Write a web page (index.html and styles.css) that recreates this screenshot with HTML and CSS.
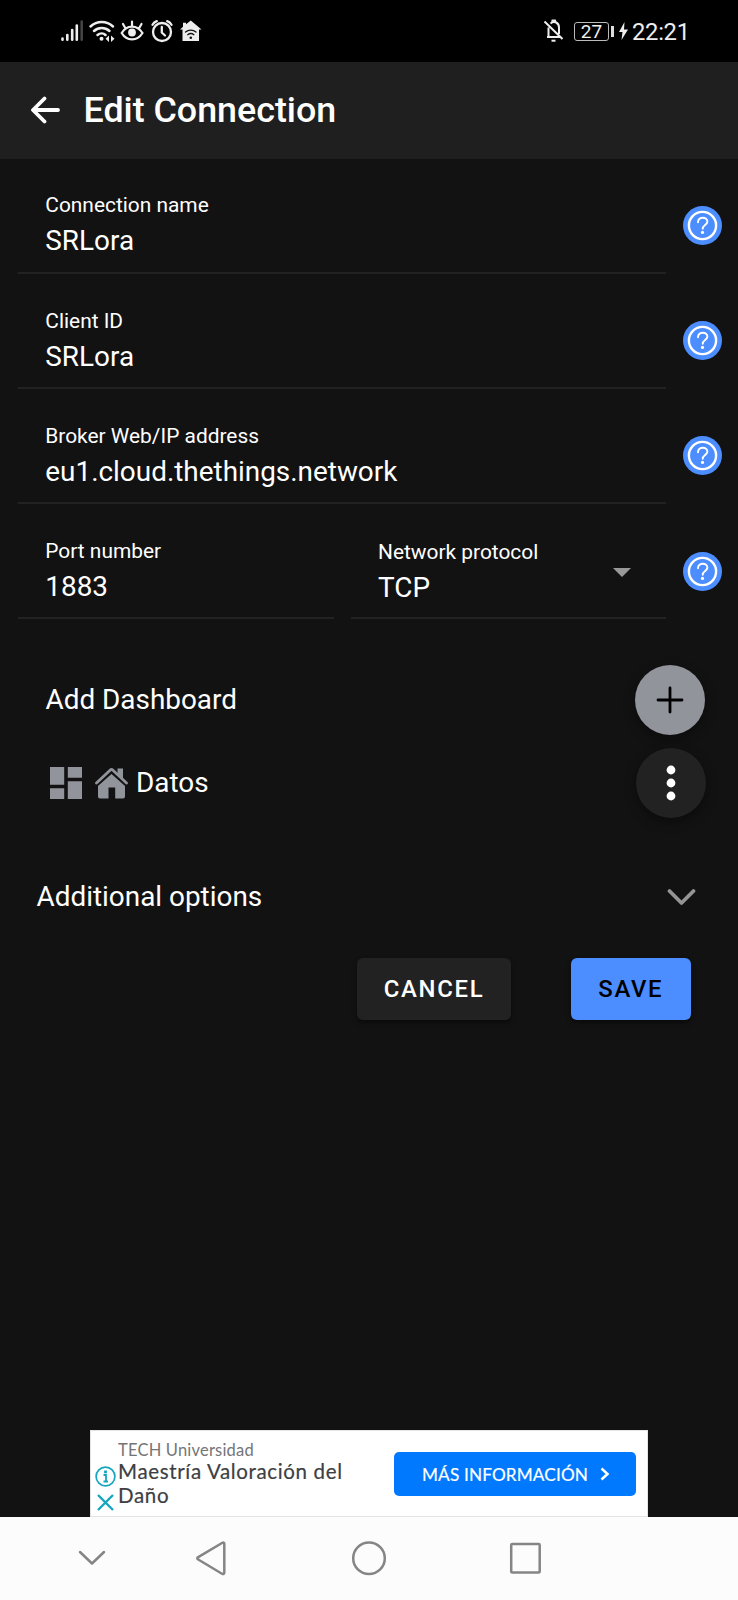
FILE: index.html
```html
<!DOCTYPE html>
<html lang="en">
<head>
<meta charset="utf-8">
<title>Edit Connection</title>
<link rel="stylesheet" href="styles.css">
</head>
<body>
<svg class="defs" width="0" height="0">
  <symbol id="help" viewBox="0 0 39 39">
    <circle cx="19.5" cy="19.5" r="19.5" fill="#4c8dff"/>
    <circle cx="19.5" cy="19.5" r="13.6" fill="none" stroke="#fff" stroke-width="2.4"/>
    <path d="M15 16.200c0-6.200 9.700-5.600 9.400-.6-.2 3.300-4.700 3.600-4.700 7.200" fill="none" stroke="#fff" stroke-width="1.900" stroke-linecap="round"/>
    <circle cx="19.500" cy="26.400" r="1.600" fill="#fff"/>
  </symbol>
</svg>
<div class="screen">
  <div class="status">
    <svg class="status-left" viewBox="60 16 144 30" width="144" height="30" fill="none" stroke="#eee" stroke-linecap="round">
      <g stroke-width="2.600"><path d="M62.500 38.500v1.200M67.300 35v4.700M72.200 30v9.700M76.800 25.500v14.200"/><path d="M81.700 21.500v18.200" stroke="#444"/></g>
      <g stroke-width="2.500"><path d="M90.500 26.500c6.500-6 16-6 22.500 0M94 31c4.500-4 11-4 15.500 0M97.500 35c2.500-2 6-2 8 0"/></g>
      <circle cx="101.500" cy="38.800" r="2" fill="#eee" stroke="none"/>
      <path d="M109 35.500v6.500l-3.500-3.200zM111 35.500v6.500l3.500-3.200z" fill="#eee" stroke="none"/>
      <g stroke-width="2.200"><path d="M121.700 33c5-8.500 15.500-8.500 20.800 0c-5.300 8.500-15.800 8.500-20.800 0zM132 21.500v4M123 24l2 3.500M141.500 24l-2 3.500"/></g>
      <circle cx="132" cy="32.500" r="3.900" fill="#eee" stroke="none"/>
      <g stroke-width="2.300"><circle cx="162" cy="32" r="9"/><path d="M161.800 27v5.500l3.200 3M152.500 24.800c1-1.800 2.500-3 4.300-3.600M171.500 24.800c-1-1.800-2.500-3-4.300-3.600"/></g>
      <path d="M180 29.500l3-2.800v-4h3v1.500l4.800-3.700 10.700 9h-2.500v11.500h-16.500v-11.500z" fill="#eee" stroke="none"/>
      <path d="M185.500 32c3-2.500 7.500-2.500 10.500 0M187.700 34.700c2-1.500 4.300-1.500 6.200 0" stroke="#111" stroke-width="1.300"/>
      <circle cx="190.800" cy="37.800" r="1.300" fill="#111" stroke="none"/>
    </svg>
    <div class="status-right">
      <svg viewBox="543 18 22 26" width="22" height="26" fill="none" stroke="#eee" stroke-width="2">
        <path d="M544.500 21.500l18 17.500M547 37h13M548.500 37v-9.500M550.500 23.500c4-3.500 8.500-.5 8.500 4v6.500M552 22l.5-1.500h2.500l.5 1.500"/><path d="M551.500 40.700h4"/>
      </svg>
      <span class="battery">27</span><span class="battery-tip"></span>
      <svg class="bolt" viewBox="0 0 9 18" width="9" height="18"><path d="M5.500 0L0 10h3.500L2.500 18 9 7.500H5z" fill="#eee"/></svg>
      <span class="clock">22:21</span>
    </div>
  </div>
  <header class="header">
    <svg viewBox="0 0 30 28" width="30" height="28" fill="none" stroke="#fff" stroke-width="3.800" stroke-linecap="round" stroke-linejoin="round"><path d="M14.500 2.500L3 14l11.500 11.500M3.500 14h24.500"/></svg>
    <h1 class="title">Edit Connection</h1>
  </header>
  <main class="form">
    <div class="row">
      <div class="field"><span class="label">Connection name</span><span class="value">SRLora</span></div>
      <svg class="help" width="39" height="39"><use href="#help"/></svg>
    </div>
    <div class="row">
      <div class="field"><span class="label">Client ID</span><span class="value">SRLora</span></div>
      <svg class="help" width="39" height="39"><use href="#help"/></svg>
    </div>
    <div class="row">
      <div class="field"><span class="label">Broker Web/IP address</span><span class="value">eu1.cloud.thethings.network</span></div>
      <svg class="help" width="39" height="39"><use href="#help"/></svg>
    </div>
    <div class="row split">
      <div class="field"><span class="label">Port number</span><span class="value">1883</span></div>
      <div class="field select">
        <div class="select-text"><span class="label">Network protocol</span><span class="value">TCP</span></div>
        <svg class="caret" width="18" height="9" viewBox="0 0 18 9"><path d="M0 0h18L9 9z" fill="#999"/></svg>
      </div>
      <svg class="help" width="39" height="39"><use href="#help"/></svg>
    </div>
    <div class="add">
      <span class="item-text">Add Dashboard</span>
      <button class="fab fab-add"><svg width="28" height="28" viewBox="0 0 28 28" stroke="#000" stroke-width="2.800" stroke-linecap="round"><path d="M14 2v24M2 14h24"/></svg></button>
    </div>
    <div class="dash">
      <svg width="32" height="32" viewBox="0 0 32 32" fill="#92949c"><path d="M0 0h14.200v17.800H0zM17.800 0H32v10.700H17.800zM0 21.300h14.200V32H0zM17.800 14.200H32V32H17.800z"/></svg>
      <svg class="home" width="33" height="32" viewBox="0 0 33 32" fill="#92949c"><path d="M16.500 4.500L30 16.500V29.500Q30 31.500 28 31.500H20.200V20.500H13.500V31.500H5Q3 31.500 3 29.500V16.500z"/><path d="M1.200 17.500L15.300 5Q16.500 4 17.700 5L31.800 17.500" fill="none" stroke="#121212" stroke-width="4.400"/><path d="M22.500 1.500h5.500v12l-5.500-5z"/><path d="M1.500 16L15.300 3Q16.500 1.800 17.700 3L31.500 16" fill="none" stroke="#92949c" stroke-width="2.800" stroke-linecap="round"/></svg>
      <span class="item-text">Datos</span>
      <button class="fab fab-more"><svg width="10" height="36" viewBox="0 0 10 36" fill="#fff"><circle cx="5" cy="5" r="4.400"/><circle cx="5" cy="18" r="4.400"/><circle cx="5" cy="31" r="4.400"/></svg></button>
    </div>
    <div class="more">
      <span class="item-text">Additional options</span>
      <svg width="29" height="18" viewBox="0 0 29 18" fill="none" stroke="#959595" stroke-width="3.700" stroke-linecap="round" stroke-linejoin="round"><path d="M2.500 3l12 12 12-12"/></svg>
    </div>
    <div class="actions">
      <button class="btn cancel">CANCEL</button>
      <button class="btn save">SAVE</button>
    </div>
  </main>
  <div class="ad">
    <div class="ad-marks">
      <svg width="21" height="21" viewBox="0 0 21 21" fill="none" stroke="#16a6bd"><circle cx="10.500" cy="10.500" r="9.400" stroke-width="1.700"/><path d="M8.500 9h2.500v6.200M8.500 15.500h4.500" stroke-width="1.800"/><path d="M10.500 4.500v2.800" stroke-width="2.800"/></svg>
      <svg width="17" height="17" viewBox="0 0 17 17" stroke="#16a6bd" stroke-width="2.400"><path d="M1 1l15 15M16 1L1 16"/></svg>
    </div>
    <div class="ad-text">
      <span class="ad-brand">TECH Universidad</span>
      <span class="ad-line">Maestría Valoración del</span>
      <span class="ad-line">Daño</span>
    </div>
    <div class="ad-button"><span>MÁS INFORMACIÓN</span><svg width="10" height="14" viewBox="0 0 10 14" fill="none" stroke="#fff" stroke-width="2.500"><path d="M1.500 1.500L7.500 7l-6 5.500"/></svg></div>
  </div>
  <nav class="nav">
    <svg viewBox="0 1517 738 83" width="738" height="83" fill="none" stroke="#858585" stroke-width="2.500" stroke-linecap="round" stroke-linejoin="round">
      <path d="M80 1552l12 11.500 12-11.500"/>
      <path d="M197.800 1557.300Q196.800 1558.200 197.800 1559.200L222 1573.800Q224.300 1574.500 224.300 1572.500V1543.800Q224.300 1541.800 222 1543z"/>
      <circle cx="369" cy="1558.300" r="15.800"/>
      <rect x="511.200" y="1544" width="28.500" height="28.500" rx="1"/>
    </svg>
  </nav>
</div>
</body>
</html>
```
FILE: styles.css
```css
* { box-sizing: border-box; }
body { margin: 0; background: #121212; color: #fff; font-family: Roboto, sans-serif; }
button { border: 0; padding: 0; font-family: inherit; }
svg { display: block; flex: none; }
.defs { display: none; }
.screen { width: 738px; height: 1600px; display: flex; flex-direction: column; overflow: hidden; white-space: nowrap; }

.status { height: 61.500px; flex: none; background: #000; display: flex; justify-content: space-between; padding: 16px 49px 0 60px; }
.status-right { display: flex; height: 30px; align-items: center; color: #eee; }
.battery { width: 35px; height: 19px; margin-left: 9px; border: 1.500px solid #bbb; border-radius: 3px; font-size: 19px; line-height: 17px; text-align: center; }
.battery-tip { width: 3px; height: 11px; margin-left: 2px; background: #ddd; }
.bolt { margin-left: 5px; }
.clock { margin-left: 4px; width: 57px; font-size: 23.800px; line-height: 30px; padding-top: 1px; letter-spacing: -.3px; }

.header { height: 97.500px; flex: none; background: #1f1f1f; display: flex; align-items: center; padding: 0 0 0 30px; gap: 23.500px; }
.title { margin: 0; font-size: 35.800px; font-weight: 500; line-height: 48px; }

.form { flex: 1; display: flex; flex-direction: column; }
.row { height: 115.300px; display: flex; padding-left: 18px; gap: 17px; }
.row:first-child { height: 114.500px; }
.row:first-child .field { padding-top: 34px; }
.row:first-child .help { margin-top: 46.800px; }
.field { flex: 1 1 0; padding: 35.300px 0 0 27.300px; border-bottom: 2px solid #222; display: flex; flex-direction: column; gap: 8px; }
.label { display: block; font-size: 20.900px; line-height: 24px; }
.value { display: block; font-size: 27.900px; line-height: 32px; }
.help { margin: 47.500px 16px 0 0; }
.split .field { flex: none; width: 315.500px; padding-top: 35.300px; }
.split .select { flex-direction: row; justify-content: space-between; padding: 36.300px 35px 0 27.500px; }
.select-text { display: flex; flex-direction: column; gap: 8px; }
.caret { margin-top: 27.500px; }

.item-text { font-size: 27.900px; line-height: 36px; }
.fab { width: 70px; height: 70px; border-radius: 50%; display: grid; place-items: center; box-shadow: 0 4px 12px rgba(0,0,0,.4); }
.fab-add { background: #92949c; }
.fab-more { background: #222; margin-left: auto; }
.add { height: 70px; margin-top: 45.300px; padding: 0 33.500px 0 45.500px; display: flex; align-items: center; justify-content: space-between; }
.dash { height: 70px; margin-top: 13.700px; padding: 0 32px 0 50px; display: flex; align-items: center; }
.home { margin: 0 8px 0 13px; }
.more { height: 40px; margin-top: 58.600px; padding: 0 42px 0 36.500px; display: flex; align-items: center; justify-content: space-between; }
.actions { margin-top: 41.400px; padding-right: 47px; display: flex; justify-content: flex-end; gap: 59.500px; }
.btn { height: 62px; border-radius: 6px; font-size: 23.900px; font-weight: 500; letter-spacing: 1.700px; line-height: 62px; box-shadow: 0 3px 5px rgba(0,0,0,.4); }
.cancel { width: 154px; background: #222; color: #fff; }
.save { width: 120.500px; background: #4c8dff; color: #000; }

.ad { width: 558px; height: 86.500px; flex: none; margin-left: 90px; background: #fff; border: 1.500px solid #e4e4e4; display: flex; font-family: Lato, sans-serif; }
.ad-marks { width: 27px; padding: 35px 0 0 2px; display: flex; flex-direction: column; align-items: center; gap: 7px; }
.ad-text { width: 276px; padding-top: 9px; display: flex; flex-direction: column; }
.ad-brand { font-size: 16.500px; line-height: 20px; color: #757575; letter-spacing: .2px; }
.ad-line { font-size: 20.500px; line-height: 23.500px; color: #3c4043; letter-spacing: .65px; -webkit-text-stroke: .2px #3c4043; }
.ad-button { width: 242px; height: 44px; margin-top: 21px; border-radius: 5px; background: #0079ff; color: #fff; display: flex; align-items: center; padding-left: 28px; gap: 12px; font-size: 17.200px; letter-spacing: .15px; -webkit-text-stroke: .2px #fff; }
.nav { height: 83.500px; flex: none; background: #fcfcfc; padding-top: .5px; }
```
